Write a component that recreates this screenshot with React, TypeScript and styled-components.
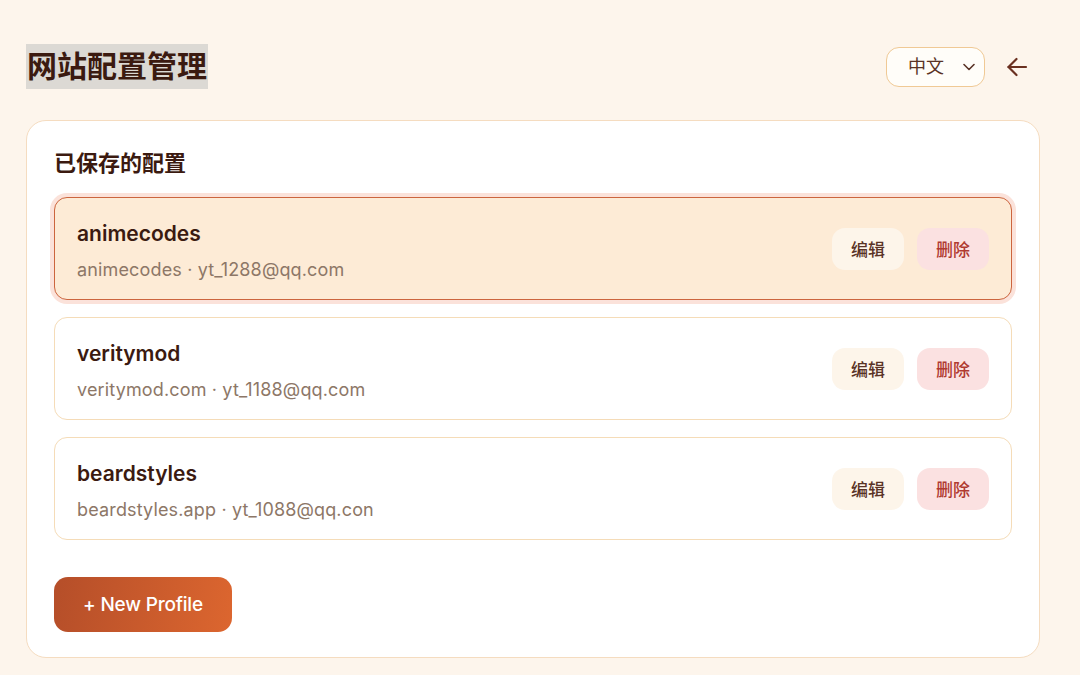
import styled, { createGlobalStyle } from 'styled-components';

const GlobalStyle = createGlobalStyle`
  html, body {
    margin: 0;
    padding: 0;
    background: #fdf5ec;
  }
  body {
    font-family: Inter, "Noto Sans CJK SC", sans-serif;
    color: #3b1a10;
  }
`;

interface Profile {
  name: string;
  site: string;
  email: string;
}

const profiles: Profile[] = [
  { name: 'animecodes', site: 'animecodes', email: 'yt_1288@qq.com' },
  { name: 'veritymod', site: 'veritymod.com', email: 'yt_1188@qq.com' },
  { name: 'beardstyles', site: 'beardstyles.app', email: 'yt_1088@qq.con' },
];

function App() {
  return (
    <>
      <GlobalStyle />
      <Page>
        <Header>
          <Title>网站配置管理</Title>
          <HeaderActions>
            <LangSelect defaultValue='zh'>
              <option value='zh'>中文</option>
              <option value='en'>English</option>
            </LangSelect>
            <BackButton aria-label='back'>
              <svg width='22' height='22' viewBox='0 0 22 22' fill='none' stroke='currentColor' strokeWidth='2.2' strokeLinecap='round' strokeLinejoin='round'>
                <path d='M20 11H2.5' />
                <path d='M10.5 3L2.5 11l8 8' />
              </svg>
            </BackButton>
          </HeaderActions>
        </Header>

        <Card>
          <SectionTitle>已保存的配置</SectionTitle>
          <List>
            {profiles.map((p, i) => (
              <Item key={p.name} $active={i === 0}>
                <ItemText>
                  <ItemName>{p.name}</ItemName>
                  <ItemMeta>
                    {p.site} · {p.email}
                  </ItemMeta>
                </ItemText>
                <ItemActions>
                  <EditButton>编辑</EditButton>
                  <DeleteButton>删除</DeleteButton>
                </ItemActions>
              </Item>
            ))}
          </List>
          <NewButton>+ New Profile</NewButton>
        </Card>
      </Page>
    </>
  );
}

export default App;

const Page = styled.div`
  padding: 44px 40px 18px 26px;
  display: flex;
  flex-direction: column;
  gap: 31px;
`;

const Header = styled.div`
  display: flex;
  justify-content: space-between;
  align-items: center;
`;

const Title = styled.h1`
  margin: 0;
  display: inline-block;
  font-size: 30px;
  line-height: 45px;
  font-weight: 700;
  background: #dcd9d4;
  color: #3b1a10;
  padding: 0 1px;
`;

const HeaderActions = styled.div`
  display: flex;
  align-items: center;
  gap: 21px;
  margin-right: 12px;
`;

const LangSelect = styled.select`
  appearance: none;
  width: 99px;
  height: 40px;
  border: 1.5px solid #f0c995;
  border-radius: 13px;
  background: #fffdf9
    url("data:image/svg+xml,%3Csvg xmlns='http://www.w3.org/2000/svg' width='12' height='8' viewBox='0 0 12 8'%3E%3Cpath d='M1 1.5l5 5 5-5' fill='none' stroke='%235a3326' stroke-width='1.6' stroke-linecap='round' stroke-linejoin='round'/%3E%3C/svg%3E")
    no-repeat right 9px center;
  padding: 0 0 0 21px;
  font-family: Inter, "Noto Sans CJK SC", sans-serif;
  font-size: 18px;
  color: #5a3326;
`;

const BackButton = styled.button`
  border: none;
  background: none;
  padding: 0;
  display: flex;
  color: #6a3020;
  cursor: pointer;
`;

const Card = styled.div`
  background: #fff;
  border: 1.5px solid #f5dcc0;
  border-radius: 20px;
  padding: 27px 27px 25px 27px;
  display: flex;
  flex-direction: column;
  align-items: flex-start;
`;

const SectionTitle = styled.h2`
  margin: 0 0 19px;
  font-size: 22px;
  line-height: 30px;
  font-weight: 600;
  color: #3b1a10;
`;

const List = styled.div`
  width: 100%;
  display: flex;
  flex-direction: column;
  gap: 17px;
  margin-bottom: 37px;
`;

const Item = styled.div<{ $active: boolean }>`
  height: 103px;
  box-sizing: border-box;
  display: flex;
  align-items: center;
  justify-content: space-between;
  padding: 0 22px;
  border-radius: 13px;
  background: ${({ $active }) => ($active ? '#fdebd6' : '#fff')};
  border: 1.5px solid ${({ $active }) => ($active ? '#cc653e' : '#f5dcb8')};
  box-shadow: ${({ $active }) => ($active ? '0 0 0 4px #fbe2da' : 'none')};
`;

const ItemText = styled.div`
  display: flex;
  flex-direction: column;
  gap: 12px;
  margin-top: 5px;
`;

const ItemName = styled.div`
  font-size: 21px;
  line-height: 26px;
  font-weight: 620;
  color: #3b1a10;
`;

const ItemMeta = styled.div`
  font-size: 18px;
  line-height: 22px;
  color: #8d7767;
  letter-spacing: 0.15px;
`;

const ItemActions = styled.div`
  display: flex;
  gap: 13px;
`;

const ActionButton = styled.button`
  width: 72px;
  height: 42px;
  border: none;
  border-radius: 13px;
  font-family: Inter, "Noto Sans CJK SC", sans-serif;
  font-size: 17px;
  font-weight: 500;
  cursor: pointer;
`;

const EditButton = styled(ActionButton)`
  background: #fdf5ea;
  color: #5a3326;
`;

const DeleteButton = styled(ActionButton)`
  background: #fbe1e1;
  color: #b03a30;
`;

const NewButton = styled.button`
  width: 178px;
  height: 55px;
  border: none;
  border-radius: 14px;
  background: linear-gradient(100deg, #b54e29 0%, #dc662f 100%);
  color: #fff;
  font-family: Inter, "Noto Sans CJK SC", sans-serif;
  font-size: 19px;
  font-weight: 550;
  letter-spacing: -0.2px;
  cursor: pointer;
`;
